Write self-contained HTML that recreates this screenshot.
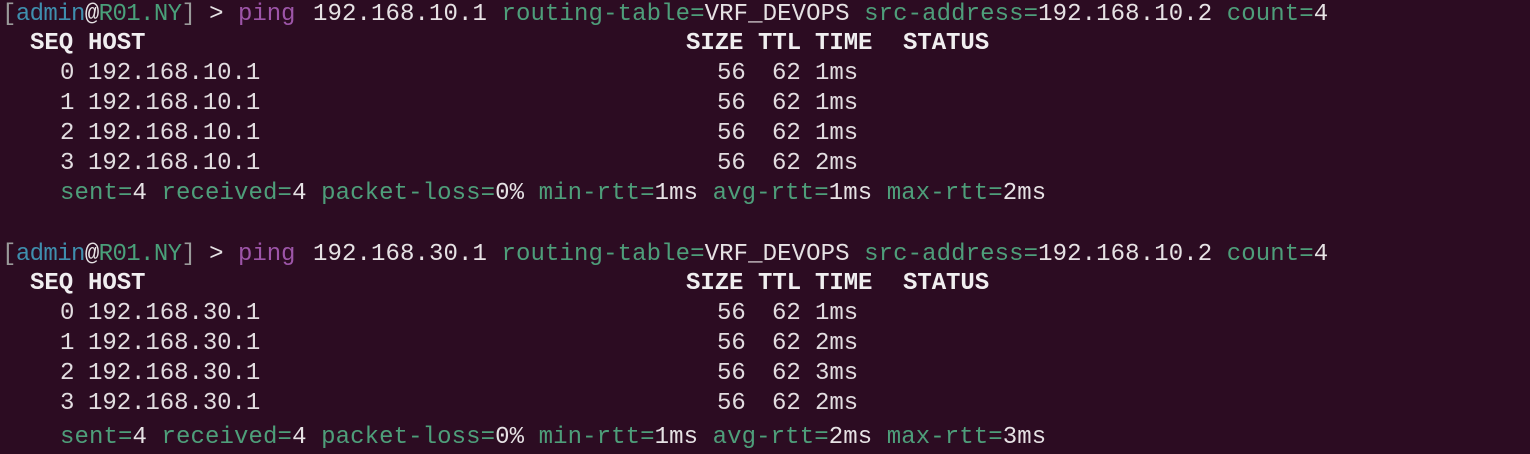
<!DOCTYPE html>
<html><head><meta charset="utf-8"><style>
html,body{margin:0;padding:0;background:#2c0c22;}
body{width:1530px;height:454px;position:relative;overflow:hidden;font-family:"Liberation Mono","DejaVu Sans Mono",monospace;font-size:24px;letter-spacing:-0.05px;color:#e2dde0;}
.l{position:absolute;left:0;height:30px;line-height:30px;width:1530px;white-space:pre;}
.l>span{position:absolute;top:0;}
.g{color:#4e9e7a}.b{color:#3f8fae}.n{color:#4aa07a}.p{color:#9d55a8}.k{color:#9a9a9a}.w{color:#e6e2e4}
.h{font-weight:bold;color:#f0eef0}
.wide{letter-spacing:0.1px}
i{font-style:normal}
</style></head><body>

<div class="l" style="top:0px">
<span style="left:2px;letter-spacing:-0.6px"><i class="k">[</i><i class="b">admin</i><i class="w">@</i><i class="n">R01.NY</i><i class="k">]</i> <i class="w">&gt;</i></span>
<span class="p" style="left:238px">ping</span>
<span class="wide" style="left:313px"><i class="w">192.168.10.1</i> <i class="g">routing-table=</i><i class="w">VRF_DEVOPS</i> <i class="g">src-address=</i><i class="w">192.168.10.2</i> <i class="g">count=</i><i class="w">4</i></span>
</div>
<div class="l h" style="top:29px"><span style="left:30px">SEQ</span><span style="left:88px">HOST</span><span style="left:686px">SIZE</span><span style="left:758px">TTL</span><span style="left:815px">TIME</span><span style="left:903px">STATUS</span></div>
<div class="l" style="top:59px"><span style="left:60px">0</span><span style="left:88px">192.168.10.1</span><span style="left:717px">56</span><span style="left:772px">62</span><span style="left:815px">1ms</span></div>
<div class="l" style="top:89px"><span style="left:60px">1</span><span style="left:88px">192.168.10.1</span><span style="left:717px">56</span><span style="left:772px">62</span><span style="left:815px">1ms</span></div>
<div class="l" style="top:119px"><span style="left:60px">2</span><span style="left:88px">192.168.10.1</span><span style="left:717px">56</span><span style="left:772px">62</span><span style="left:815px">1ms</span></div>
<div class="l" style="top:149px"><span style="left:60px">3</span><span style="left:88px">192.168.10.1</span><span style="left:717px">56</span><span style="left:772px">62</span><span style="left:815px">2ms</span></div>
<div class="l g" style="top:179px"><span class="wide" style="left:60px">sent=<i class="w">4</i> received=<i class="w">4</i> packet-loss=<i class="w">0%</i> min-rtt=<i class="w">1ms</i> avg-rtt=<i class="w">1ms</i> max-rtt=<i class="w">2ms</i></span></div>

<div class="l" style="top:240px">
<span style="left:2px;letter-spacing:-0.6px"><i class="k">[</i><i class="b">admin</i><i class="w">@</i><i class="n">R01.NY</i><i class="k">]</i> <i class="w">&gt;</i></span>
<span class="p" style="left:238px">ping</span>
<span class="wide" style="left:313px"><i class="w">192.168.30.1</i> <i class="g">routing-table=</i><i class="w">VRF_DEVOPS</i> <i class="g">src-address=</i><i class="w">192.168.10.2</i> <i class="g">count=</i><i class="w">4</i></span>
</div>
<div class="l h" style="top:269px"><span style="left:30px">SEQ</span><span style="left:88px">HOST</span><span style="left:686px">SIZE</span><span style="left:758px">TTL</span><span style="left:815px">TIME</span><span style="left:903px">STATUS</span></div>
<div class="l" style="top:299px"><span style="left:60px">0</span><span style="left:88px">192.168.30.1</span><span style="left:717px">56</span><span style="left:772px">62</span><span style="left:815px">1ms</span></div>
<div class="l" style="top:329px"><span style="left:60px">1</span><span style="left:88px">192.168.30.1</span><span style="left:717px">56</span><span style="left:772px">62</span><span style="left:815px">2ms</span></div>
<div class="l" style="top:359px"><span style="left:60px">2</span><span style="left:88px">192.168.30.1</span><span style="left:717px">56</span><span style="left:772px">62</span><span style="left:815px">3ms</span></div>
<div class="l" style="top:389px"><span style="left:60px">3</span><span style="left:88px">192.168.30.1</span><span style="left:717px">56</span><span style="left:772px">62</span><span style="left:815px">2ms</span></div>
<div class="l g" style="top:423px"><span class="wide" style="left:60px">sent=<i class="w">4</i> received=<i class="w">4</i> packet-loss=<i class="w">0%</i> min-rtt=<i class="w">1ms</i> avg-rtt=<i class="w">2ms</i> max-rtt=<i class="w">3ms</i></span></div>

</body></html>
